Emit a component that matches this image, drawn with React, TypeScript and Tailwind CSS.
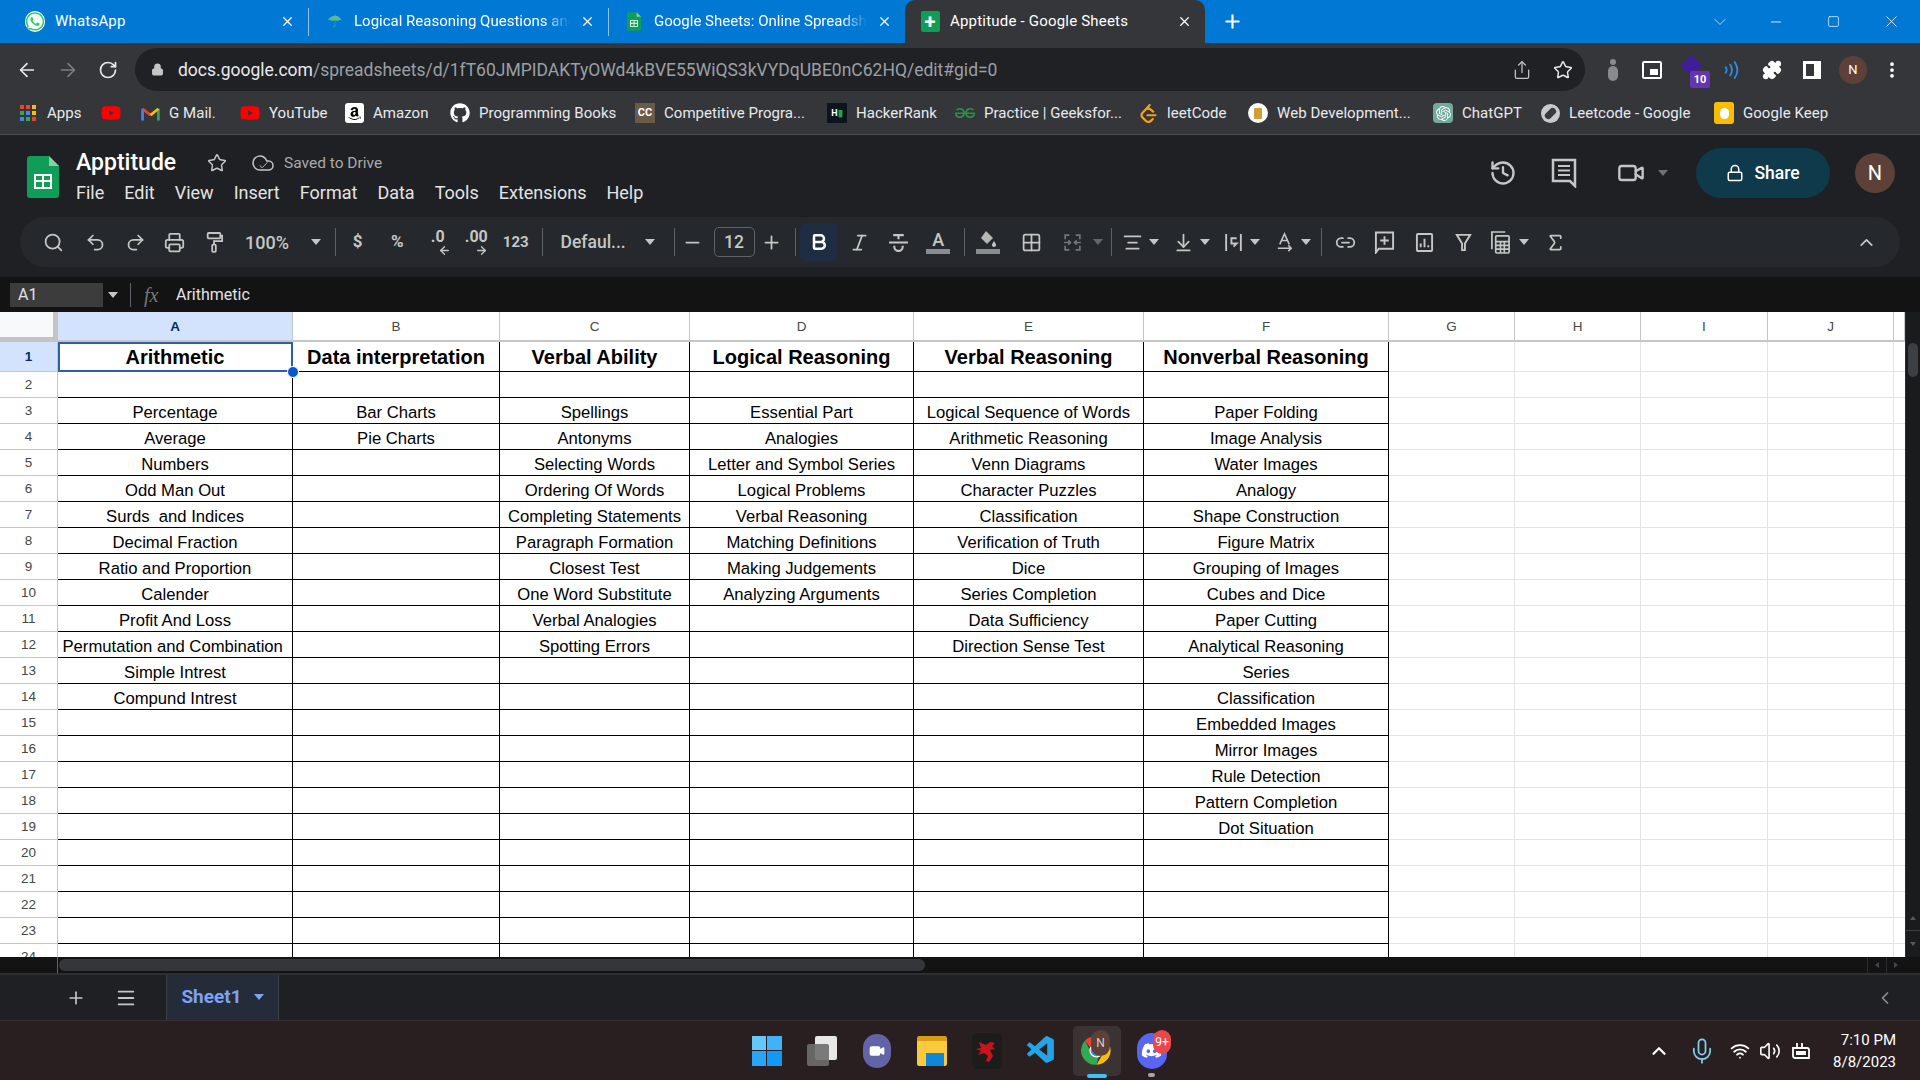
import type { ReactNode } from "react";
import {
  ArrowLeft, ArrowRight, RotateCw, Lock, Share, Star, Puzzle, EllipsisVertical, X, Plus, ChevronDown, ChevronUp, ChevronLeft,
  Minus, Square, Search, Printer, Bold, Italic, Grid2x2, AlignCenter, ArrowDownToLine, Link2, History,
  Video, Sigma, Menu, Mic, Wifi, Volume2, Undo2, Redo2, Cloud, Check,
} from "lucide-react";
import { FaWhatsapp, FaYoutube, FaAmazon, FaGithub, FaDiscord } from "react-icons/fa";
import { SiGeeksforgeeks, SiLeetcode, SiOpenai } from "react-icons/si";
import { VscVscode } from "react-icons/vsc";

const chromeFont = "font-['Roboto',sans-serif]";

const columns = [
  ["Arithmetic", "", "Percentage", "Average", "Numbers", "Odd Man Out", "Surds  and Indices", "Decimal Fraction", "Ratio and Proportion", "Calender", "Profit And Loss", "Permutation and Combination ", "Simple Intrest", "Compund Intrest"],
  ["Data interpretation", "", "Bar Charts", "Pie Charts"],
  ["Verbal Ability", "", "Spellings", "Antonyms", "Selecting Words", "Ordering Of Words", "Completing Statements", "Paragraph Formation", "Closest Test", "One Word Substitute", "Verbal Analogies", "Spotting Errors"],
  ["Logical Reasoning", "", "Essential Part", "Analogies", "Letter and Symbol Series", "Logical Problems", "Verbal Reasoning", "Matching Definitions", "Making Judgements", "Analyzing Arguments"],
  ["Verbal Reasoning", "", "Logical Sequence of Words", "Arithmetic Reasoning", "Venn Diagrams", "Character Puzzles", "Classification", "Verification of Truth", "Dice", "Series Completion", "Data Sufficiency", "Direction Sense Test"],
  ["Nonverbal Reasoning", "", "Paper Folding", "Image Analysis", "Water Images", "Analogy", "Shape Construction", "Figure Matrix", "Grouping of Images", "Cubes and Dice", "Paper Cutting", "Analytical Reasoning", "Series", "Classification", "Embedded Images", "Mirror Images", "Rule Detection", "Pattern Completion", "Dot Situation"],
];
const rowNumbers = Array.from({ length: 24 }, (_, i) => i + 1);

function SheetsLogo({ className }: { className: string }) {
  return (
    <svg viewBox="0 0 32 42" className={className}>
      <path d="M3 0h19l10 10v29a3 3 0 0 1-3 3H3a3 3 0 0 1-3-3V3a3 3 0 0 1 3-3z" fill="#0f9d58" />
      <path d="M22 0l10 10H22z" fill="#87ceac" />
      <path d="M7 18h18v15H7zm2 2v4h6v-4zm8 0v4h6v-4zm-8 6v5h6v-5zm8 0v5h6v-5z" fill="#fff" fillRule="evenodd" />
    </svg>
  );
}

function ChromeLogo() {
  return (
    <svg viewBox="0 0 48 48" className="w-[31px] h-[31px]">
      <path d="M24 2a22 22 0 0 1 19 11H24a11 11 0 0 0-10 6L6 9A22 22 0 0 1 24 2z" fill="#ea4335" />
      <path d="M43 13a22 22 0 0 1-19 33l10-17a11 11 0 0 0 0-16z" fill="#fbbc04" />
      <path d="M24 46A22 22 0 0 1 6 9l9 16a11 11 0 0 0 12 9z" fill="#34a853" />
      <circle cx="24" cy="24" r="10" fill="#4285f4" stroke="#fff" strokeWidth="2" />
    </svg>
  );
}

function Tab({ width, icon, title, active, fade, pad = "pl-[15px]" }: { width: string; icon: ReactNode; title: string; active?: boolean; fade?: boolean; pad?: string }) {
  return (
    <div className={`${width} ${pad} relative h-[43px] flex items-center pr-[13px] gap-[10px] text-white ${active ? "bg-[#35363a] rounded-t-[10px]" : ""}`}>
      <span className="w-5 h-5 flex items-center justify-center shrink-0">{icon}</span>
      <span className={`flex-1 whitespace-nowrap overflow-hidden text-[15px] ${fade ? "[mask-image:linear-gradient(90deg,#000_88%,transparent)]" : "tracking-[0.2px]"}`}>{title}</span>
      <X className="w-[15px] h-[15px] shrink-0" strokeWidth={2} />
    </div>
  );
}

function TabBar() {
  return (
    <div className="h-[43px] bg-[#0078d4] flex items-end">
      <Tab width="w-[308px]" pad="pl-[25px]" title="WhatsApp" icon={<FaWhatsapp className="text-[#25d366] text-[21px] bg-white rounded-full" />} />
      <div className="w-px h-[28px] bg-[#8fc3ea] self-center" />
      <Tab width="w-[299px]" fade title="Logical Reasoning Questions and Answers" icon={<span className="text-[#5bb98c] text-[17px] leading-none">☂</span>} />
      <div className="w-px h-[28px] bg-[#8fc3ea] self-center" />
      <Tab width="w-[296px]" fade title="Google Sheets: Online Spreadsheet Editor" icon={<SheetsLogo className="w-[14px] h-[19px]" />} />
      <Tab width="w-[300px]" active title="Apptitude - Google Sheets" icon={<span className="w-[19px] h-[21px] bg-[#0f9d58] rounded-[2px] flex items-center justify-center text-white text-[20px] font-bold leading-none">+</span>} />
      <Plus className="ml-[17px] mb-[11px] w-[21px] h-[21px] text-white" strokeWidth={2.5} />
      <div className="ml-auto h-[43px] flex items-center text-white">
        <ChevronDown className="w-[20px] h-[20px] mr-[38px] text-[#cfe6f7]" strokeWidth={1} />
        <Minus className="w-[16px] h-[16px] mr-[43px]" strokeWidth={1.25} />
        <Square className="w-[13px] h-[15px] mr-[42px]" strokeWidth={1.25} />
        <X className="w-[19px] h-[19px] mr-[19px]" strokeWidth={1} />
      </div>
    </div>
  );
}

function AddressBar() {
  return (
    <div className="h-[48px] bg-[#35363a] flex items-end text-[#e8eaed]">
      <div className="h-[43px] w-[135px] flex items-center pl-[16px] gap-[19px]">
        <ArrowLeft className="w-[22px] h-[22px]" strokeWidth={1.75} />
        <ArrowRight className="w-[22px] h-[22px] text-[#7c7e82]" strokeWidth={1.75} />
        <RotateCw className="w-[20px] h-[20px]" strokeWidth={2} />
      </div>
      <div className="h-[43px] w-[1450px] bg-[#202124] rounded-full flex items-center pl-[16px] pr-[12px]">
        <Lock className="w-[13px] h-[15px] text-[#c4c7c5] mr-[14px]" fill="#c4c7c5" />
        <span className="text-[17.5px] whitespace-nowrap pt-px">docs.google.com<span className="text-[#9aa0a6]">/spreadsheets/d/1fT60JMPIDAKTyOWd4kBVE55WiQS3kVYDqUBE0nC62HQ/edit#gid=0</span></span>
        <Share className="ml-auto w-[20px] h-[20px] mr-[21px] text-[#c4c7c5]" strokeWidth={1.5} />
        <Star className="w-[20px] h-[20px] text-[#e8eaed]" strokeWidth={1.75} />
      </div>
      <div className="h-[43px] flex items-center">
        <span className="ml-[23px] w-[10px] h-[22px] flex flex-col items-center gap-px">
          <span className="w-[6px] h-[6px] rounded-full bg-[#8a8b8e]" />
          <span className="w-[10px] h-[15px] rounded-full bg-[#8a8b8e]" />
        </span>
        <span className="ml-[24px] w-[20px] h-[18px] border-2 border-white rounded-[2px] flex items-end justify-end p-[2px]"><span className="w-[8px] h-[6px] bg-white" /></span>
        <span className="relative ml-[18px] w-[30px] h-[30px]">
          <span className="absolute left-[4px] top-[3px] w-[15px] h-[15px] bg-[#3f1d9b] rotate-45" />
          <span className="absolute right-0 bottom-[-3px] w-[20px] h-[17px] bg-[#6236b0] rounded-[2px] text-white text-[11px] font-bold leading-[17px] text-center">10</span>
        </span>
        <svg viewBox="0 0 20 24" className="ml-[13px] w-[18px] h-[24px] text-[#2f8be6]" fill="none" stroke="currentColor" strokeWidth="2" strokeLinecap="round">
          <path d="M3 9q2 3 0 6M8 6q4 6 0 12M13 3q6 9 0 18" />
        </svg>
        <Puzzle className="ml-[21px] w-[20px] h-[20px] text-white" fill="#fff" />
        <span className="ml-[21px] w-[18px] h-[18px] border-[3px] border-white border-r-[7px]" />
        <span className="ml-[18px] w-[28px] h-[28px] rounded-full bg-[#5d4037] text-white text-[13px] flex items-center justify-center">N</span>
        <EllipsisVertical className="ml-[15px] w-[20px] h-[20px] text-white" strokeWidth={2.5} />
      </div>
    </div>
  );
}

function Bookmark({ width, icon, label }: { width: string; icon: ReactNode; label?: string }) {
  return (
    <div className={`${width} flex items-center gap-[9px] shrink-0 whitespace-nowrap`}>
      <span className="w-5 h-5 flex items-center justify-center shrink-0">{icon}</span>
      {label && <span>{label}</span>}
    </div>
  );
}

function Bookmarks() {
  const yt = <FaYoutube className="text-[#ff0000] text-[22px]" />;
  return (
    <div className="h-[44px] bg-[#35363a] flex items-center pl-[18px] pt-px text-[15px] tracking-[0.05px] text-[#e8eaed] border-b border-[#4a4b4f]">
      <Bookmark width="w-[83px]" label="Apps" icon={
        <span className="grid grid-cols-3 gap-[2px]">
          {["bg-[#ea4335]", "bg-[#ea4335]", "bg-[#fbbc04]", "bg-[#34a853]", "bg-[#4285f4]", "bg-[#fbbc04]", "bg-[#4285f4]", "bg-[#34a853]", "bg-[#ea4335]"].map((c, i) => (
            <span key={i} className={`w-[4px] h-[4px] ${c}`} />
          ))}
        </span>
      } />
      <Bookmark width="w-[39px]" icon={yt} />
      <Bookmark width="w-[100px]" label="G Mail." icon={
        <svg viewBox="0 0 24 18" className="w-[19px] h-[15px]" fill="none" strokeWidth="3.4">
          <path d="M2 18V3" stroke="#4285f4" /><path d="M22 18V3" stroke="#34a853" /><path d="M2 3l10 8" stroke="#ea4335" /><path d="M22 3l-10 8" stroke="#fbbc04" />
        </svg>
      } />
      <Bookmark width="w-[104px]" label="YouTube" icon={yt} />
      <Bookmark width="w-[106px]" label="Amazon" icon={<span className="w-[19px] h-[20px] bg-white rounded-[3px] flex items-center justify-center"><FaAmazon className="text-black text-[15px]" /></span>} />
      <Bookmark width="w-[185px]" label="Programming Books" icon={<FaGithub className="text-white text-[20px]" />} />
      <Bookmark width="w-[192px]" label="Competitive Progra..." icon={<span className="w-[20px] h-[20px] bg-[#6b5a48] text-white text-[11px] font-bold leading-[20px] text-center">CC</span>} />
      <Bookmark width="w-[128px]" label="HackerRank" icon={<span className="w-[20px] h-[20px] bg-[#0e141e] text-white text-[9px] font-bold leading-[20px] text-center">H<span className="text-[#1ba94c]">▮</span></span>} />
      <Bookmark width="w-[183px]" label="Practice | Geeksfor..." icon={<SiGeeksforgeeks className="text-[#2f8d46] text-[20px]" />} />
      <Bookmark width="w-[110px]" label="leetCode" icon={<SiLeetcode className="text-[#f89f1b] text-[19px]" />} />
      <Bookmark width="w-[185px]" label="Web Development..." icon={<span className="w-[20px] h-[20px] rounded-full bg-white flex items-center justify-center"><span className="w-[8px] h-[11px] bg-[#d29d33] rounded-[1px]" /></span>} />
      <Bookmark width="w-[107px]" label="ChatGPT" icon={<span className="w-[20px] h-[20px] rounded-[4px] bg-[#74aa9c] flex items-center justify-center"><SiOpenai className="text-white text-[15px]" /></span>} />
      <Bookmark width="w-[174px]" label="Leetcode - Google" icon={<span className="w-[19px] h-[19px] rounded-full bg-[#c8cacc] flex items-center justify-center"><span className="w-[7px] h-[13px] bg-[#3a3b3f] rounded-full rotate-45" /></span>} />
      <Bookmark width="w-[120px]" label="Google Keep" icon={<span className="w-[20px] h-[22px] bg-[#fbbc04] rounded-[3px] flex items-center justify-center"><span className="w-[9px] h-[11px] bg-white rounded-full" /></span>} />
    </div>
  );
}

function Tool({ className = "w-[39.5px]", children }: { className?: string; children: ReactNode }) {
  return <div className={`h-[38px] shrink-0 flex items-center justify-center ${className}`}>{children}</div>;
}

function Caret({ className = "w-[14px]" }: { className?: string }) {
  return (
    <div className={`h-[38px] shrink-0 flex items-center justify-center ${className}`}>
      <span className="border-x-[5px] border-x-transparent border-t-[6px] border-t-[#c4c7c5]" />
    </div>
  );
}

function Sep({ className }: { className: string }) {
  return <div className={`w-px h-[28px] bg-[#5f6368] shrink-0 ${className}`} />;
}

const ico = "w-[21px] h-[21px]";

function Toolbar() {
  return (
    <div className="mt-[3px] ml-[20px] w-[1880px] h-[50px] rounded-full bg-[#25282c] flex items-center pl-[13px] text-[#c4c7c5]">
      <Tool className="w-[40px] mr-[3px]"><Search className={ico} /></Tool>
      <Tool><Undo2 className={ico} /></Tool>
      <Tool><Redo2 className={ico} /></Tool>
      <Tool><Printer className={ico} /></Tool>
      <Tool>
        <svg viewBox="0 0 20 24" className="w-[18px] h-[24px]" fill="none" stroke="currentColor" strokeWidth="2"><rect x="3" y="2" width="14" height="6" rx="1" /><path d="M17 5h2v6h-9v4" /><rect x="8" y="15" width="4" height="8" rx="1" /></svg>
      </Tool>
      <Tool className="w-[66px] text-[18px] font-medium">100%</Tool>
      <Caret className="w-[26px] pl-[6px]" />
      <Sep className="ml-[9px] mr-[2px]" />
      <Tool className="w-[39.5px] text-[17px] font-bold">$</Tool>
      <Tool className="w-[39.5px] text-[17px] font-bold">%</Tool>
      <Tool className="w-[39.5px]">
        <span className="relative text-[16px] font-bold leading-none pb-[10px] pl-[2px]">.0<ArrowLeft className="absolute left-[9px] top-[15px] w-[13px] h-[13px]" strokeWidth={2.5} /></span>
      </Tool>
      <Tool className="w-[39.5px]">
        <span className="relative text-[16px] font-bold leading-none pb-[10px]">.00<ArrowRight className="absolute left-[10px] top-[15px] w-[13px] h-[13px]" strokeWidth={2.5} /></span>
      </Tool>
      <Tool className="w-[39.5px] text-[15px] font-bold">123</Tool>
      <Sep className="ml-[6px]" />
      <Tool className="w-[100px] pl-[18px] justify-start! text-[17.5px] font-medium">Defaul...</Tool>
      <Caret />
      <Sep className="ml-[17px]" />
      <Tool className="w-[36px]"><Minus className={ico} /></Tool>
      <div className="ml-[3px] w-[41px] h-[30px] rounded-[5px] border border-[#5f6368] flex items-center justify-center text-[17.5px] font-medium shrink-0">12</div>
      <Tool className="w-[34px]"><Plus className={ico} /></Tool>
      <Sep className="ml-[6px]" />
      <Tool className="ml-[4px] w-[38px] rounded-[6px] bg-[#1f2d42] text-white"><Bold className="w-[20px] h-[20px]" strokeWidth={3} /></Tool>
      <Tool className="ml-[2px] w-[39.5px]"><Italic className={ico} /></Tool>
      <Tool>
        <svg viewBox="0 0 20 20" className={ico} fill="none" stroke="currentColor" strokeWidth="2"><path d="M5 3h10M10 3v4M1 10h18M6 13v1a4 4 0 0 0 8 0v-1" /></svg>
      </Tool>
      <Tool>
        <span className="flex flex-col items-center w-[24px]"><span className="text-[18px] leading-[19px] font-medium">A</span><span className="w-full h-[5px] bg-[#8a8d90]" /></span>
      </Tool>
      <Sep className="ml-[6px]" />
      <Tool className="ml-[3px] w-[40px]">
        <span className="flex flex-col items-center w-[24px]">
          <svg viewBox="0 0 20 18" className="w-[20px] h-[18px]" fill="currentColor"><path d="M8 1l7 7-6 6-6-6z" fillOpacity=".9" /><path d="M16 11q2 3 2 4a2 2 0 0 1-4 0q0-1 2-4z" /></svg>
          <span className="w-full h-[5px] mt-[1px] bg-[#8a8d90]" />
        </span>
      </Tool>
      <Tool className="ml-[3px] w-[40px]"><Grid2x2 className={ico} /></Tool>
      <Tool className="ml-px w-[40px] text-[#74777a]">
        <svg viewBox="0 0 20 20" className={ico} fill="none" stroke="currentColor" strokeWidth="1.6"><path d="M3 7V3h4M13 3h4v4M3 13v4h4M13 17h4v-4M2 10h6M18 10h-6M6 8l2 2-2 2M14 8l-2 2 2 2" /></svg>
      </Tool>
      <Caret className="w-[12px] opacity-40" />
      <Sep className="ml-[7px]" />
      <Tool className="ml-[6px] w-[28px]"><AlignCenter className={ico} /></Tool>
      <Caret className="w-[16px]" />
      <Tool className="ml-[7px] w-[28px]"><ArrowDownToLine className={ico} /></Tool>
      <Caret className="w-[16px]" />
      <Tool className="ml-[6px] w-[28px]">
        <svg viewBox="0 0 20 20" className={ico} fill="none" stroke="currentColor" strokeWidth="1.8"><path d="M3 2v16M17 2v16M13 6H8v5h5l-3 3" /></svg>
      </Tool>
      <Caret className="w-[16px]" />
      <Tool className="ml-[7px] w-[28px]">
        <svg viewBox="0 0 20 22" className={ico} fill="none" stroke="currentColor" strokeWidth="1.6"><path d="M5 13l5-11 5 11M7 9h6M3 17h14M14 14l3 3-3 3" /></svg>
      </Tool>
      <Caret className="w-[16px]" />
      <Sep className="ml-[7px]" />
      <Tool className="ml-[3px] w-[40px]"><Link2 className={ico} /></Tool>
      <Tool className="w-[39.5px]">
        <svg viewBox="0 0 22 24" className="w-[21px] h-[24px]" fill="none" stroke="currentColor" strokeWidth="2"><path d="M2 2h18v17H5l-3 4zM11 6v9M6.5 10.500h9" /></svg>
      </Tool>
      <Tool className="w-[39.5px]">
        <svg viewBox="0 0 20 22" className="w-[19px] h-[21px]" fill="none" stroke="currentColor" strokeWidth="2"><rect x="2" y="2" width="16" height="18" rx="1" /><path d="M6 16v-4M10 16V7M14 16v-2" /></svg>
      </Tool>
      <Tool className="w-[39.5px]">
        <svg viewBox="0 0 20 22" className={ico} fill="none" stroke="currentColor" strokeWidth="2"><path d="M3 3h14l-5.500 9v7h-3v-7z" /></svg>
      </Tool>
      <Tool className="ml-[3px] w-[28px]">
        <svg viewBox="0 0 22 26" className="w-[21px] h-[25px]" fill="none" stroke="currentColor" strokeWidth="1.8"><path d="M2 20V2h14" /><rect x="6" y="6" width="14" height="18" rx="1" /><path d="M6 12h14M6 16h14M6 20h14M11 12v12M15 12v12" /></svg>
      </Tool>
      <Caret className="w-[16px] ml-px" />
      <Tool className="ml-[4px] w-[40px]"><Sigma className={ico} /></Tool>
      <Tool className="ml-auto mr-[14px] w-[40px]"><ChevronUp className={ico} /></Tool>
    </div>
  );
}

function DocHeader() {
  return (
    <div className={`h-[142px] bg-[#1f2023] ${chromeFont} text-[#e3e3e3]`}>
      <div className="h-[79px] flex">
        <div className="pl-[27px] pt-[21px] w-[76px]">
          <SheetsLogo className="w-[32px] h-[42px]" />
        </div>
        <div className="pt-[11px]">
          <div className="h-[34px] flex items-center">
            <span className="text-[23px] font-medium text-white w-[131px]">Apptitude</span>
            <Star className="w-[20px] h-[20px] text-[#c4c7c5]" strokeWidth={1.75} />
            <span className="relative ml-[24px] w-[24px] h-[24px] flex items-center justify-center">
              <Cloud className="w-[24px] h-[24px] text-[#c4c7c5]" strokeWidth={1.5} />
              <Check className="absolute w-[11px] h-[11px] text-[#c4c7c5] top-[9px]" strokeWidth={2} />
            </span>
            <span className="ml-[9px] text-[15.5px] text-[#a8abad] pt-[2px]">Saved to Drive</span>
          </div>
          <div className="-mt-px flex text-[18px] leading-[27px] text-[#e3e3e3] gap-x-[20px]">
            {["File", "Edit", "View", "Insert", "Format", "Data", "Tools", "Extensions", "Help"].map((m) => (
              <span key={m}>{m}</span>
            ))}
          </div>
        </div>
        <div className="ml-auto flex items-center pb-[3px] pr-[25px] text-[#c4c7c5]">
          <History className="w-[28px] h-[28px] mr-[34px]" strokeWidth={2} />
          <svg viewBox="0 0 26 30" className="w-[26px] h-[30px] mr-[40px]" fill="none" stroke="currentColor" strokeWidth="2.5"><path d="M2 2h22v26l-5-5H2z" /><path d="M7 8h12M7 12.500h12M7 17h12" strokeWidth="2" /></svg>
          <Video className="w-[28px] h-[28px] mr-[13px]" strokeWidth={2} />
          <span className="border-x-[5px] border-x-transparent border-t-[6px] border-t-[#6f7275] mr-[28px]" />
          <div className="w-[134px] h-[50px] rounded-full bg-[#0e3a4c] flex items-center justify-center gap-[10px] text-white text-[17.5px] font-medium mr-[25px]">
            <Lock className="w-[18px] h-[20px]" strokeWidth={2} />
            Share
          </div>
          <span className="w-[40px] h-[40px] rounded-full bg-[#5d4037] text-white text-[20px] flex items-center justify-center">N</span>
        </div>
      </div>
      <Toolbar />
    </div>
  );
}

function FormulaBar() {
  return (
    <div className={`h-[35px] bg-[#131314] flex items-center ${chromeFont} text-[#e3e3e3]`}>
      <div className="ml-[10px] w-[93px] h-[24px] bg-[#3c3c3c] text-[16px] leading-[24px] pl-[8px]">A1</div>
      <span className="ml-[5px] border-x-[5px] border-x-transparent border-t-[6px] border-t-[#c4c7c5]" />
      <div className="ml-[12px] w-px h-[24px] bg-[#5f6368]" />
      <span className="ml-[13px] w-[24px] text-[#74777a] font-['Liberation_Serif',serif] italic text-[20px]">fx</span>
      <span className="ml-[8px] text-[16px]">Arithmetic</span>
    </div>
  );
}

function Grid() {
  const headers = ["A", "B", "C", "D", "E", "F", "G", "H", "I", "J", ""];
  return (
    <div className="h-[645px] flex bg-white overflow-hidden">
      <div className="relative flex-1 grid grid-cols-[58px_235px_207px_190px_224px_230px_245px_126px_126px_127px_126px_11px] grid-rows-[30px_30px_repeat(24,26px)] font-['Liberation_Sans',sans-serif] overflow-hidden">
        <div className="bg-[#f8f9fa] border-r-[5px] border-b-[5px] border-[#c4c4c4]" />
        {headers.map((h, i) => (
          <div key={i} className={`flex items-center justify-center pt-[2px] text-[13.5px] border-b-2 border-r border-[#c4c7c5] ${i === 0 ? "bg-[#d3e3fd] font-bold text-[#0b2a5b]" : "text-[#444746]"}`}>{h}</div>
        ))}
        {rowNumbers.map((row) => (
          <Row key={row} row={row} />
        ))}
        <div className="absolute left-[58px] top-[30px] w-[235px] h-[30px] border-2 border-[#2f5ea8] pointer-events-none" />
        <div className="absolute left-[287px] top-[54px] w-[12px] h-[12px] rounded-full bg-[#0b57d0] border border-white" />
      </div>
      <div className="w-[15px] bg-[#1a1b1d] flex flex-col items-center border-l border-[#2b2c2f]">
        <div className="mt-[31px] w-[10px] h-[34px] rounded-full bg-[#3c4043]" />
        <div className="mt-auto h-[26px] w-full flex items-center justify-center border-b border-[#3c4043]"><span className="border-x-[3px] border-x-transparent border-b-[4px] border-b-[#55585c]" /></div>
        <div className="h-[26px] w-full flex items-center justify-center"><span className="border-x-[3px] border-x-transparent border-t-[4px] border-t-[#55585c]" /></div>
      </div>
    </div>
  );
}

function Row({ row }: { row: number }) {
  return (
    <>
      <div className={`flex items-center justify-center pt-[2px] border-r border-b border-[#c4c7c5] text-[13.5px] ${row === 1 ? "bg-[#d3e3fd] font-bold text-[#0b2a5b]" : "text-[#444746]"}`}>{row}</div>
      {columns.map((col, c) => (
        <div key={c} className={`flex items-center justify-center border-r border-b border-black overflow-hidden whitespace-pre text-black ${row === 1 ? "text-[20px] font-bold" : "text-[16.67px] pt-[3px]"}`}>
          {col[row - 1] ?? ""}
        </div>
      ))}
      {[0, 1, 2, 3, 4].map((c) => (
        <div key={c} className={`border-b border-r border-[#e2e3e3] ${c === 4 ? "border-r-0" : ""}`} />
      ))}
    </>
  );
}

function ScrollStrip() {
  return (
    <div className="h-[16px] bg-[#131314] flex items-center">
      <div className="w-[58px] h-full border-r border-[#5f6368]" />
      <div className="ml-px w-[866px] h-[12px] rounded-full bg-[#35363a]" />
      <div className="ml-auto mr-[15px] flex h-full">
        <div className="w-[20px] border-x border-[#2b2c2f] flex items-center justify-center"><span className="border-y-[3px] border-y-transparent border-r-[4px] border-r-[#45474a]" /></div>
        <div className="w-[18px] flex items-center justify-center"><span className="border-y-[3px] border-y-transparent border-l-[4px] border-l-[#45474a]" /></div>
      </div>
    </div>
  );
}

function SheetTabs() {
  return (
    <div className={`h-[47px] bg-[#1f2023] border-t-2 border-[#2e2f32] flex items-center ${chromeFont} text-[#c4c7c5]`}>
      <Plus className="ml-[66px] w-[20px] h-[20px]" strokeWidth={2} />
      <Menu className="ml-[29px] w-[22px] h-[22px]" strokeWidth={2} />
      <div className="ml-[29px] w-[113px] h-[45px] bg-[#252c39] border-x border-[#3c4043] flex items-center justify-center gap-[12px] pb-px text-[#7ea2f5] text-[19px] font-bold">
        Sheet1
        <span className="border-x-[5px] border-x-transparent border-t-[6px] border-t-[#7ea2f5]" />
      </div>
      <ChevronLeft className="ml-auto mr-[25px] w-[20px] h-[20px] text-[#8e9194]" strokeWidth={2} />
    </div>
  );
}

function TaskIcon({ children, className = "" }: { children: ReactNode; className?: string }) {
  return <div className={`relative w-[55px] h-full flex items-center justify-center ${className}`}>{children}</div>;
}

function Taskbar() {
  return (
    <div className={`h-[60px] bg-[#2a1f20] border-t border-[#3a3033] flex items-center ${chromeFont} text-white`}>
      <div className="ml-[739px] flex items-center h-full">
        <TaskIcon>
          <span className="grid grid-cols-2 gap-[1px] w-[30px] h-[30px]">
            <span className="bg-[#64c8fb]" /><span className="bg-[#3fb2f8]" /><span className="bg-[#28a5f6]" /><span className="bg-[#1398f4]" />
          </span>
        </TaskIcon>
        <TaskIcon>
          <span className="relative w-[30px] h-[30px]">
            <span className="absolute right-0 top-0 w-[22px] h-[24px] bg-[#e8e8e8] rounded-[2px]" />
            <span className="absolute left-0 bottom-0 w-[22px] h-[22px] bg-[#6e6e6e]/90 rounded-[2px]" />
          </span>
        </TaskIcon>
        <TaskIcon>
          <span className="w-[28px] h-[34px] rounded-full bg-[#6264a7] flex items-center justify-center"><Video className="w-[16px] h-[16px] text-white" fill="#fff" /></span>
        </TaskIcon>
        <TaskIcon>
          <span className="relative w-[30px] h-[30px] rounded-[2px] bg-[#fbc93d] border-t-[5px] border-[#d89c12]">
            <span className="absolute right-[3px] bottom-0 w-[18px] h-[13px] bg-[#0f87d6]" />
          </span>
        </TaskIcon>
        <TaskIcon>
          <span className="w-[30px] h-[36px] rounded-[5px] bg-[#1c1c1c] flex items-center justify-center">
            <svg viewBox="0 0 24 28" className="w-[24px] h-[28px]" fill="#c8141a"><path d="M4 5l7 3 4-3 5 1-3 3 3 3-5 1 3 6-4 6-3-1 2-5-4-3-6 2 3-4-5-2 5-1z" /></svg>
          </span>
        </TaskIcon>
        <TaskIcon><VscVscode className="text-[#23a3e8] text-[33px]" /></TaskIcon>
        <TaskIcon>
          <div className="w-[48px] h-[50px] rounded-[5px] bg-[#3b3233] flex items-center justify-center">
            <ChromeLogo />
          </div>
          <span className="absolute right-[14px] top-[9px] w-[19px] h-[26px] rounded-full bg-[#5d4037] text-[#d4cfcd] text-[12px] flex items-center justify-center">N</span>
          <span className="absolute bottom-[2px] w-[20px] h-[4px] rounded-full bg-[#3fc1f9]" />
        </TaskIcon>
        <TaskIcon>
          <span className="w-[30px] h-[36px] rounded-full bg-[#5865f2] flex items-center justify-center"><FaDiscord className="text-white text-[21px]" /></span>
          <span className="absolute left-[29px] top-[9px] w-[18px] h-[24px] rounded-full bg-[#e8484d] text-white text-[12px] flex items-center justify-center">9+</span>
          <span className="absolute bottom-[3px] w-[7px] h-[4px] rounded-full bg-[#a8a5a5]" />
        </TaskIcon>
      </div>
      <div className="ml-auto flex items-center">
        <ChevronUp className="w-[22px] h-[22px] mr-[18px]" strokeWidth={2.5} />
        <Mic className="w-[28px] h-[28px] text-[#7fd0ef] mr-[14px]" strokeWidth={1.5} />
        <Wifi className="w-[20px] h-[20px] mr-[9px]" strokeWidth={2.25} />
        <Volume2 className="w-[22px] h-[22px] mr-[9px]" strokeWidth={1.75} />
        <svg viewBox="0 0 22 22" className="w-[22px] h-[22px] mr-[21px]" fill="none" stroke="currentColor" strokeWidth="1.8"><path d="M3 8h14a2 2 0 0 1 2 2v8H5a2 2 0 0 1-2-2zM7 8V3M12 8V3" /><path d="M6 11h10v4H6z" fill="currentColor" stroke="none" /></svg>
        <div className="mr-[24px] text-right text-[15px] leading-[22px]">
          <div>7:10 PM</div>
          <div>8/8/2023</div>
        </div>
      </div>
    </div>
  );
}

export default function App() {
  return (
    <div className={`w-[1920px] h-[1080px] overflow-hidden ${chromeFont} bg-[#1f2023]`}>
      <TabBar />
      <AddressBar />
      <Bookmarks />
      <DocHeader />
      <FormulaBar />
      <Grid />
      <ScrollStrip />
      <SheetTabs />
      <Taskbar />
    </div>
  );
}
